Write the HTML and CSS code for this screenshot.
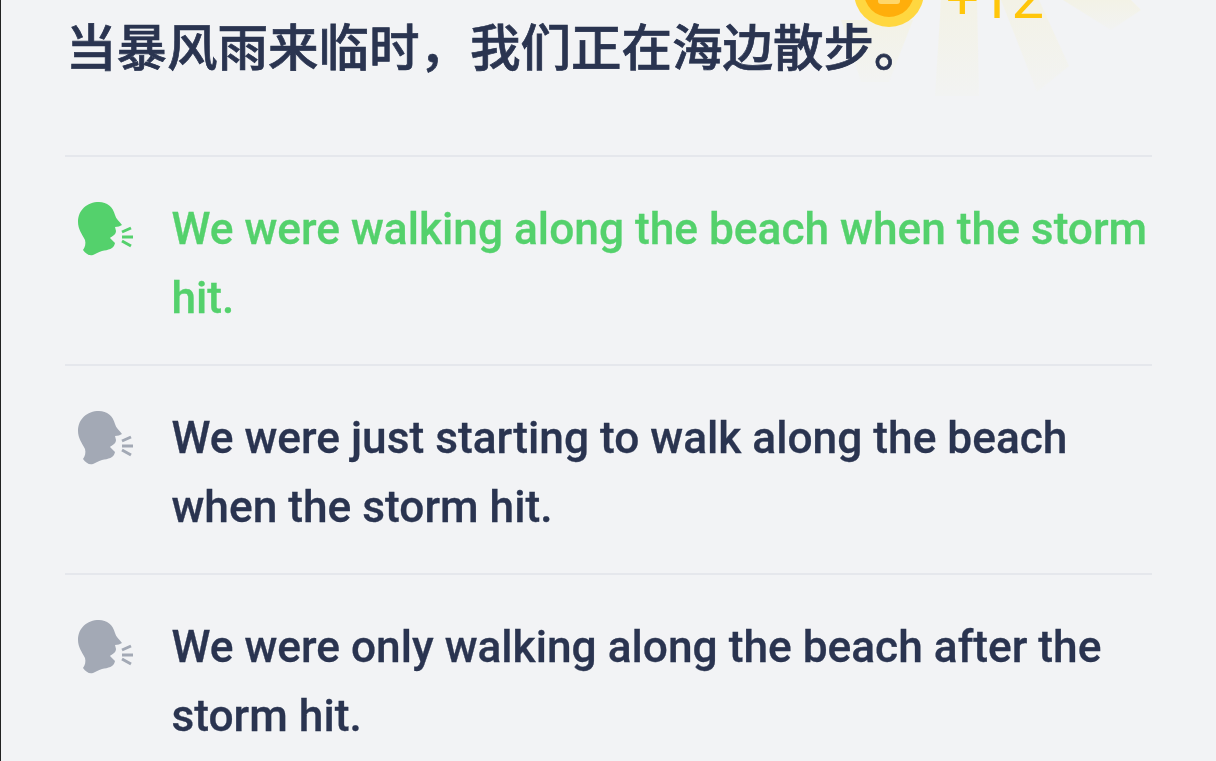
FILE: index.html
```html
<!DOCTYPE html>
<html lang="zh-CN">
<head>
    <meta charset="UTF-8">
    <title>lesson</title>
    <link rel="stylesheet" href="styles.css">
</head>
<body>
    <div class="page">
        <svg class="rays" width="380" height="110" viewBox="0 0 380 110">
            <defs>
                <linearGradient id="rayFade" x1="0" y1="0" x2="0" y2="1">
                    <stop offset="0" stop-color="#f3f2e6"/>
                    <stop offset="1" stop-color="#f2f3f2"/>
                </linearGradient>
            </defs>
            <path d="M40 20H112L88 82H60Z" fill="url(#rayFade)"/>
            <path d="M140 0H176L178 96H134Z" fill="url(#rayFade)"/>
            <path d="M200 0H238L268 66L236 92Z" fill="url(#rayFade)"/>
            <path d="M262 0H330L340 10L310 30Z" fill="url(#rayFade)"/>
        </svg>
        <div class="coin"><div class="coin-inner"><div class="coin-mark"></div></div></div>
        <div class="points">+12</div>

        <h1 class="title">当暴风雨来临时，我们正在海边散步。</h1>

        <div class="option correct">
            <svg class="speaker" viewBox="0 0 56 56"><path d="M21 0C9 0 0 8 0 20C0 27 4 32 7 38C8 42 7 45 5 48C8 52 11 54 15 53C18 52 20 50 24 49C30 48 36 47 37 41L32 36C34 34 38 33 38 29L37 25C40 25 42 24 44 23C41 19 38 17 37 13C35 5 29 0 21 0Z"/><path class="sound" d="M44 30L53 26M44 35H55M44 39L53 44"/></svg>
            <p class="option-text">We were walking along the beach when the storm hit.</p>
        </div>
        <div class="option">
            <svg class="speaker" viewBox="0 0 56 56"><path d="M21 0C9 0 0 8 0 20C0 27 4 32 7 38C8 42 7 45 5 48C8 52 11 54 15 53C18 52 20 50 24 49C30 48 36 47 37 41L32 36C34 34 38 33 38 29L37 25C40 25 42 24 44 23C41 19 38 17 37 13C35 5 29 0 21 0Z"/><path class="sound" d="M44 30L53 26M44 35H55M44 39L53 44"/></svg>
            <p class="option-text">We were just starting to walk along the beach when the storm hit.</p>
        </div>
        <div class="option">
            <svg class="speaker" viewBox="0 0 56 56"><path d="M21 0C9 0 0 8 0 20C0 27 4 32 7 38C8 42 7 45 5 48C8 52 11 54 15 53C18 52 20 50 24 49C30 48 36 47 37 41L32 36C34 34 38 33 38 29L37 25C40 25 42 24 44 23C41 19 38 17 37 13C35 5 29 0 21 0Z"/><path class="sound" d="M44 30L53 26M44 35H55M44 39L53 44"/></svg>
            <p class="option-text">We were only walking along the beach after the storm hit.</p>
        </div>
    </div>
</body>
</html>
```

FILE: styles.css
```css
html, body {
    margin: 0;
    height: 100%;
    overflow: hidden;
    background-color: #f2f3f5;
}
body {
    font-family: Roboto, "Noto Sans CJK SC", sans-serif;
    color: #2a3450;
}
.page {
    position: relative;
    height: 761px;
    box-sizing: border-box;
    border-left: 1px solid #222;
    padding: 0 64px 0 64px;
    overflow: hidden;
    filter: blur(0.6px);
}
.rays {
    position: absolute;
    left: 800px;
    top: 0;
}
.coin {
    position: absolute;
    left: 853px;
    top: -43px;
    width: 70px;
    height: 70px;
    border-radius: 50%;
    background-color: #ffd740;
    display: flex;
    align-items: center;
    justify-content: center;
}
.coin-inner {
    width: 50px;
    height: 50px;
    border-radius: 50%;
    background-color: #ffae0b;
    display: flex;
    align-items: center;
    justify-content: center;
}
.coin-mark {
    width: 22px;
    height: 24px;
    background-color: #ffd76a;
    border-radius: 3px;
}
.points {
    position: absolute;
    left: 945px;
    top: -24px;
    font-size: 58px;
    line-height: 44px;
    color: #ffc60a;
}
.title {
    margin: 0;
    padding: 19px 0 0 1px;
    height: 136px;
    font-family: "Noto Sans CJK SC", sans-serif;
    font-size: 50.5px;
    font-weight: 500;
    -webkit-text-stroke: 0.7px #2a3450;
    line-height: 50px;
    position: relative;
}
.option {
    display: flex;
    align-items: flex-start;
    border-top: 2px solid #e5e7ec;
    padding-top: 38px;
    height: 169px;
}
.speaker {
    flex: none;
    margin: 7px 37.5px 0 13px;
    width: 56px;
    height: 56px;
}
.speaker path {
    fill: #a3a9b5;
}
.speaker .sound {
    fill: none;
    stroke: #a3a9b5;
    stroke-width: 3;
}
.option-text {
    margin: 0;
    font-size: 44.25px;
    font-weight: 500;
    -webkit-text-stroke: 0.3px currentColor;
    line-height: 69.4px;
}
.correct {
    color: #54d16c;
}
.correct .speaker path {
    fill: #54d16c;
}
.correct .speaker .sound {
    fill: none;
    stroke: #54d16c;
}
```
